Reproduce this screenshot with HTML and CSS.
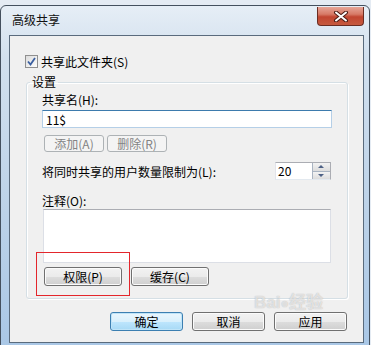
FILE: index.html
```html
<!DOCTYPE html>
<html lang="zh-CN">
<head>
  <meta charset="UTF-8" />
  <title>高级共享</title>
  <link rel="stylesheet" href="styles.css">
</head>
<body>
  <div class="window">
    <div class="titlebar">
      <span class="title">高级共享</span>
      <button class="close-btn">
        <svg width="16" height="11" viewBox="0 0 16 11">
          <path d="M3 1.5 L13 9.5 M13 1.5 L3 9.5" stroke="#4a1d16" stroke-width="4" stroke-linecap="round"/>
          <path d="M3 1.5 L13 9.5 M13 1.5 L3 9.5" stroke="#fff" stroke-width="2" stroke-linecap="round"/>
        </svg>
      </button>
    </div>

    <div class="panel">
      <label class="check-row">
        <span class="checkbox">
          <svg width="9" height="9" viewBox="0 0 9 9">
            <path d="M1 4.5 L3.5 7.5 L8 1" stroke="#3a5fa0" stroke-width="1.8" fill="none"/>
          </svg>
        </span>
        共享此文件夹(S)
      </label>

      <fieldset class="group">
        <legend>设置</legend>
        <div class="field-label">共享名(H):</div>
        <input class="share-name" type="text" value="11$">
        <div class="small-buttons">
          <button class="btn disabled">添加(A)</button>
          <button class="btn disabled">删除(R)</button>
        </div>
        <div class="limit-row">
          <span>将同时共享的用户数量限制为(L):</span>
          <div class="spinner">
            <span class="spin-value">20</span>
            <div class="spin-buttons">
              <span class="spin up"></span>
              <span class="spin down"></span>
            </div>
          </div>
        </div>
        <div class="field-label comment-label">注释(O):</div>
        <div class="comment"></div>
        <div class="group-buttons">
          <button class="btn">权限(P)</button>
          <button class="btn">缓存(C)</button>
        </div>
        <div class="highlight"></div>
      </fieldset>

      <div class="dialog-buttons">
        <button class="btn default">确定</button>
        <button class="btn">取消</button>
        <button class="btn">应用</button>
      </div>

      <div class="watermark">Bai<span class="paw">●</span>经验</div>
    </div>
  </div>
</body>
</html>
```

FILE: styles.css
```css
body {
  margin: 0;
  background: #e4ebf3;
  font-family: "Noto Sans CJK SC", "DejaVu Sans", sans-serif;
  font-size: 12px;
  color: #000;
  overflow: hidden;
}

.window {
  margin-top: 5px;
  width: 370px;
  height: 345px;
  box-sizing: border-box;
  border: 1px solid #44505e;
  border-radius: 6px 6px 0 0;
  background: linear-gradient(to bottom, #e6eef6 0%, #d2e0ee 15%, #bcd2e8 60%, #a9c7e6 100%);
  padding: 0 5px 0 8px;
}

.titlebar {
  height: 29px;
  display: flex;
  justify-content: space-between;
  align-items: flex-start;
}

.title {
  margin: 7px 0 0 3px;
  line-height: 14px;
  color: #111;
}

.close-btn {
  margin-top: 1px;
  width: 47px;
  height: 19px;
  padding: 0;
  border: 1px solid #6a2c22;
  border-top: none;
  border-radius: 0 0 4px 4px;
  background: linear-gradient(to bottom, #e6a597 0%, #d77a66 40%, #c14530 55%, #c65a3f 100%);
  display: flex;
  align-items: center;
  justify-content: center;
}

.panel {
  position: relative;
  height: 308px;
  box-sizing: border-box;
  border: 1px solid #5a6b7d;
  background: #f0f0f0;
  padding: 19px 15px 0 15px;
}

.check-row {
  display: flex;
  align-items: center;
  height: 13px;
  line-height: 14px;
  gap: 3px;
}

.checkbox {
  width: 11px;
  height: 11px;
  border: 1px solid #8f8f8f;
  background: linear-gradient(to bottom right, #dcdcdc, #fdfdfd);
  display: flex;
  align-items: center;
  justify-content: center;
}

.group {
  margin: 7px 0 0 1px;
  width: 321px;
  box-sizing: border-box;
  border: 1px solid #d5dfe5;
  border-radius: 3px;
  padding: 4px 15px 12px 15px;
  box-shadow: inset 1px 1px 0 #fff, 1px 1px 0 #fff;
}

.group legend {
  margin-left: -12px;
  padding: 0 2px;
  line-height: 14px;
}

.field-label {
  line-height: 14px;
}

.share-name {
  display: block;
  margin-top: 3px;
  width: 290px;
  height: 18px;
  box-sizing: border-box;
  border: 1px solid #b5cfe7;
  border-top-color: #3d7bad;
  padding: 0 3px;
  font-family: "Noto Sans CJK SC", "DejaVu Sans", sans-serif;
  font-size: 12px;
  outline: none;
}

.small-buttons {
  display: flex;
  gap: 3px;
  margin: 7px 0 0 2px;
}

.btn {
  height: 19px;
  padding: 0;
  border: 1px solid #707070;
  border-radius: 3px;
  background: linear-gradient(to bottom, #f2f2f2 0%, #ebebeb 50%, #dddddd 51%, #cfcfcf 100%);
  box-shadow: inset 0 0 0 1px #fbfbfb;
  font-family: "Noto Sans CJK SC", "DejaVu Sans", sans-serif;
  font-size: 12px;
  line-height: 15px;
  color: #000;
}

.small-buttons .btn {
  width: 60px;
  height: 17px;
}

.btn.disabled {
  border-color: #adb2b5;
  background: #f4f4f4;
  box-shadow: none;
  color: #838383;
}

.limit-row {
  display: flex;
  align-items: center;
  justify-content: space-between;
  margin-top: 10px;
  width: 289px;
  height: 18px;
}

.spinner {
  display: flex;
  width: 56px;
  height: 18px;
  box-sizing: border-box;
  border: 1px solid #abadb3;
  border-left-color: #e2e3ea;
  border-bottom-color: #e3e9ef;
  background: #fff;
}

.spin-value {
  flex: 1;
  padding-left: 2px;
  line-height: 16px;
}

.spin-buttons {
  width: 17px;
  display: flex;
  flex-direction: column;
  border-left: 1px solid #a9b4c2;
}

.spin {
  flex: 1;
  background: linear-gradient(to bottom, #f3f3f3, #dcdcdc);
  border-bottom: 1px solid #a9b4c2;
  position: relative;
}

.spin.down {
  border-bottom: none;
}

.spin::after {
  content: "";
  position: absolute;
  left: 5px;
  border-left: 3px solid transparent;
  border-right: 3px solid transparent;
}

.spin.up::after {
  top: 2px;
  border-bottom: 3px solid #4d6185;
}

.spin.down::after {
  top: 2px;
  border-top: 3px solid #4d6185;
}

.comment-label {
  margin-top: 14px;
}

.comment {
  margin: 1px 0 0 1px;
  width: 288px;
  height: 54px;
  box-sizing: border-box;
  border: 1px solid #dcdfe6;
  border-top-color: #abadb3;
  background: #fff;
}

.group-buttons {
  display: flex;
  gap: 9px;
  margin: 4px 0 0 2px;
}

.group-buttons .btn {
  width: 78px;
}

.highlight {
  position: absolute;
  left: 26px;
  top: 216px;
  width: 92px;
  height: 42px;
  border: 1px solid #e3262c;
}

.dialog-buttons {
  display: flex;
  justify-content: flex-end;
  gap: 9px;
  margin-top: 13px;
  padding-right: 1px;
}

.dialog-buttons .btn {
  width: 73px;
}

.btn.default {
  border-color: #3c7fb1;
  box-shadow: inset 0 0 0 1px #bfe4f8;
  background: linear-gradient(to bottom, #eaf6fd 0%, #d9f0fc 50%, #bee6fd 51%, #a7d9f5 100%);
}

.watermark {
  position: absolute;
  left: 244px;
  top: 258px;
  font-family: "Liberation Sans", "Noto Sans CJK SC", sans-serif;
  font-size: 17px;
  font-weight: bold;
  line-height: 18px;
  color: rgba(255, 255, 255, 0.6);
  text-shadow: 0 0 1px rgba(120, 120, 120, 0.55);
  pointer-events: none;
}

.paw {
  font-size: 14px;
}
```
